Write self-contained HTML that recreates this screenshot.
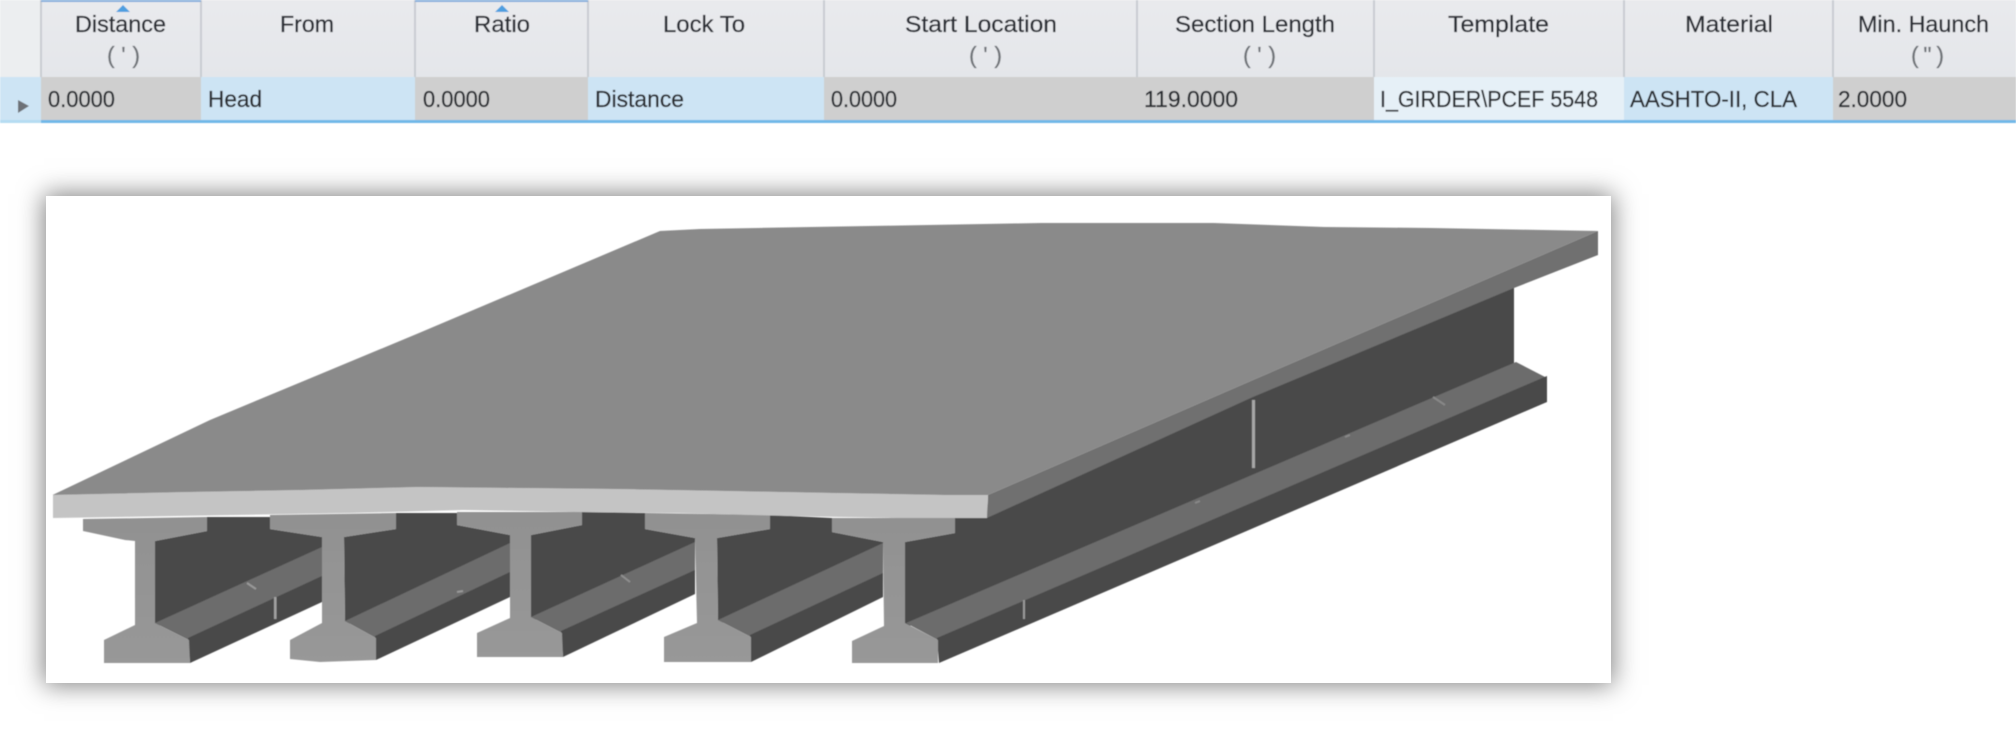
<!DOCTYPE html>
<html lang="en">
<head>
<meta charset="utf-8">
<title>Girder table and bridge model</title>
<style>
html,body{margin:0;padding:0;background:#fff;}
body{width:2016px;height:729px;overflow:hidden;position:relative;}
#pic{position:absolute;left:46px;top:196px;width:1565px;height:487px;background:#fff;box-shadow:0 0 24px 2px rgba(0,0,0,.5);}
svg{position:absolute;left:0;top:0;}
text{font-family:"Liberation Sans",sans-serif;}
.h{font-size:23px;fill:#2c2e36;stroke:#2c2e36;stroke-width:.3px;}
.u{font-size:23px;fill:#6f7378;stroke:#6f7378;stroke-width:.3px;}
.c{font-size:23px;fill:#2a2d33;stroke:#2a2d33;stroke-width:.3px;}
</style>
</head>
<body>
<div id="pic"></div>
<svg width="2016" height="729" viewBox="0 0 2016 729" xmlns="http://www.w3.org/2000/svg">
<defs>
<filter id="b1" x="-2%" y="-2%" width="104%" height="104%"><feGaussianBlur stdDeviation="0.6"/></filter>
<filter id="b2" x="-1%" y="-1%" width="102%" height="102%"><feGaussianBlur stdDeviation="0.5"/></filter>
<linearGradient id="hd" x1="0" y1="0" x2="0" y2="1"><stop offset="0" stop-color="#e9eaed"/><stop offset="1" stop-color="#e4e6ea"/></linearGradient>
<linearGradient id="ig" x1="0" y1="0" x2="0" y2="1"><stop offset="0" stop-color="#919191"/><stop offset="1" stop-color="#989898"/></linearGradient>
</defs>

<!-- TABLE -->
<g filter="url(#b1)">
<rect x="0" y="0" width="2016" height="77" fill="url(#hd)"/>
<rect x="0" y="0" width="41" height="77" fill="#eceef0"/>
<rect x="0" y="77" width="2016" height="43" fill="#cde4f4"/>
<rect x="41" y="77" width="160" height="43" fill="#cfcfcf"/>
<rect x="415" y="77" width="173" height="43" fill="#cfcfcf"/>
<rect x="824" y="77" width="313" height="43" fill="#cfcfcf"/>
<rect x="1137" y="77" width="237" height="43" fill="#cfcfcf"/>
<rect x="1374" y="77" width="250" height="43" fill="#e6f0f7"/>
<rect x="1833" y="77" width="183" height="43" fill="#cfcfcf"/>
<rect x="0" y="120" width="41" height="3" fill="#b5dcf2"/>
<rect x="41" y="120" width="1975" height="3" fill="#6fb8e8"/>
<g fill="#c9ccd2">
<rect x="40" y="0" width="2" height="77"/><rect x="200" y="0" width="2" height="77"/><rect x="414" y="0" width="2" height="77"/><rect x="587" y="0" width="2" height="77"/><rect x="823" y="0" width="2" height="77"/><rect x="1136" y="0" width="2" height="77"/><rect x="1373" y="0" width="2" height="77"/><rect x="1623" y="0" width="2" height="77"/><rect x="1832" y="0" width="2" height="77"/>
</g>
<rect x="41" y="0" width="160" height="2" fill="#85aedb"/>
<rect x="415" y="0" width="173" height="2" fill="#85aedb"/>
<polygon points="116,12 123,5 130,12" fill="#4f9fe0"/>
<polygon points="495,12 502,5 509,12" fill="#4f9fe0"/>
<polygon points="18,100 18,113 29,106" fill="#6d7177"/>

<text class="h" x="75" y="32" textLength="91" lengthAdjust="spacingAndGlyphs">Distance</text>
<text class="h" x="280" y="32" textLength="54" lengthAdjust="spacingAndGlyphs">From</text>
<text class="h" x="474" y="32" textLength="56" lengthAdjust="spacingAndGlyphs">Ratio</text>
<text class="h" x="663" y="32" textLength="82" lengthAdjust="spacingAndGlyphs">Lock To</text>
<text class="h" x="905" y="32" textLength="152" lengthAdjust="spacingAndGlyphs">Start Location</text>
<text class="h" x="1175" y="32" textLength="160" lengthAdjust="spacingAndGlyphs">Section Length</text>
<text class="h" x="1448" y="32" textLength="101" lengthAdjust="spacingAndGlyphs">Template</text>
<text class="h" x="1685" y="32" textLength="88" lengthAdjust="spacingAndGlyphs">Material</text>
<text class="h" x="1858" y="32" textLength="131" lengthAdjust="spacingAndGlyphs">Min. Haunch</text>

<text class="u" x="107" y="63" textLength="33" lengthAdjust="spacing">( ' )</text>
<text class="u" x="969" y="63" textLength="33" lengthAdjust="spacing">( ' )</text>
<text class="u" x="1243" y="63" textLength="33" lengthAdjust="spacing">( ' )</text>
<text class="u" x="1911" y="63" textLength="33" lengthAdjust="spacing">( " )</text>

<text class="c" x="48" y="107" textLength="67" lengthAdjust="spacingAndGlyphs">0.0000</text>
<text class="c" x="208" y="107" textLength="54" lengthAdjust="spacingAndGlyphs">Head</text>
<text class="c" x="423" y="107" textLength="67" lengthAdjust="spacingAndGlyphs">0.0000</text>
<text class="c" x="595" y="107" textLength="89" lengthAdjust="spacingAndGlyphs">Distance</text>
<text class="c" x="831" y="107" textLength="66" lengthAdjust="spacingAndGlyphs">0.0000</text>
<text class="c" x="1144" y="107" textLength="94" lengthAdjust="spacingAndGlyphs">119.0000</text>
<text class="c" x="1380" y="107" textLength="218" lengthAdjust="spacingAndGlyphs">I_GIRDER\PCEF 5548</text>
<text class="c" x="1630" y="107" textLength="167" lengthAdjust="spacingAndGlyphs">AASHTO-II, CLA</text>
<text class="c" x="1838" y="107" textLength="69" lengthAdjust="spacingAndGlyphs">2.0000</text>
</g>

<!-- BRIDGE -->
<g filter="url(#b2)">
<!-- Far girder flange/web at the right -->
<polygon points="905,542 955,533 955,518 987,505 1253,385 1514,275 1514,370 905,628" fill="#4a4a4a"/>
<polygon points="906,623 1516,362 1547,378 938,640" fill="#6c6c6c"/>
<polygon points="937,638 1547,376 1547,402 939,663" fill="#494949"/>
<rect x="1252" y="400" width="3" height="68" fill="#a6a6a6"/>
<rect x="1023" y="600" width="2" height="19" fill="#9a9a9a"/>
<path d="M1433 397l12 8M1345 437l5-2M1195 503l5-2" stroke="#888" stroke-width="2" fill="none"/>

<!-- Girder bay 1 -->
<polygon points="155,541 207,531 207,517 270,517 270,529 322,537 322,552 155,628" fill="#4a4a4a"/>
<polygon points="155,623 322,547 322,578 189,640" fill="#6c6c6c"/>
<polygon points="188,638 322,576 322,602 190,663" fill="#494949"/>
<rect x="274" y="597" width="2.5" height="22" fill="#a0a0a0"/>
<path d="M247 583l9 6" stroke="#999" stroke-width="2" fill="none"/>
<!-- Girder bay 2 -->
<polygon points="344,537 396,529 396,513 457,513 457,525 510,535 510,548 345,626" fill="#4a4a4a"/>
<polygon points="345,621 510,543 510,574 376,638" fill="#6c6c6c"/>
<polygon points="375,636 510,572 510,597 376,660" fill="#494949"/>
<path d="M457 592l6-1" stroke="#999" stroke-width="2" fill="none"/>
<!-- Girder bay 3 -->
<polygon points="531,535 582,525 582,512 645,513 645,529 695,538 695,547 531,622" fill="#4a4a4a"/>
<polygon points="531,617 695,542 695,572 562,633" fill="#6c6c6c"/>
<polygon points="561,631 695,570 695,594 563,657" fill="#494949"/>
<path d="M621 575l9 7" stroke="#8f8f8f" stroke-width="2" fill="none"/>
<!-- Girder bay 4 -->
<polygon points="717,538 770,529 770,515 832,518 832,532 883,542 883,548 718,625" fill="#4a4a4a"/>
<polygon points="718,620 883,543 883,575 751,637" fill="#6c6c6c"/>
<polygon points="750,635 883,573 883,597 751,662" fill="#494949"/>

<!-- I sections -->
<polygon fill="url(#ig)" points="83,519 207,517 207,531 155,541 155,623 189,640 190,663 104,663 104,640 135,625 135,541 125,540 83,531"/>
<polygon fill="url(#ig)" points="270,515 396,513 396,529 344,537 345,621 376,638 376,660 320,662 290,659 290,640 322,623 322,537 270,529"/>
<polygon fill="url(#ig)" points="457,512 582,512 582,525 531,535 531,617 562,633 563,657 477,657 477,633 510,618 510,535 457,525"/>
<polygon fill="url(#ig)" points="645,513 770,515 770,529 717,538 718,620 751,637 751,662 664,662 664,637 697,623 695,538 645,529"/>
<polygon fill="url(#ig)" points="832,518 955,518 955,533 905,542 905,623 938,640 938,663 852,663 852,641 884,626 883,542 832,532"/>

<!-- Deck side -->
<polygon points="988,495 1253,380 1598,231 1598,255 1514,288 1253,397 987,518" fill="#6f6f6f"/>
<!-- Deck front -->
<polygon fill="#c4c4c4" points="53,495 190,492 303,490 419,487 614,489 726,491 833,493 944,495 988,495 987,518 896,518 789,516 678,513 573,512 463,510 350,513 233,515 118,517 53,518"/>
<!-- Deck top -->
<path fill="#8a8a8a" d="M52.5 495 L210 420 L419 333 L660 231 L700 229 L1041 223 L1214 223 L1324 227 L1431 228 L1543 230 L1598 231 L1253 380 L988 495 L944 495 L833 493 L726 491 L614 489 L419 487 L303 490 L190 492 Z"/>
</g>
</svg>
</body>
</html>
